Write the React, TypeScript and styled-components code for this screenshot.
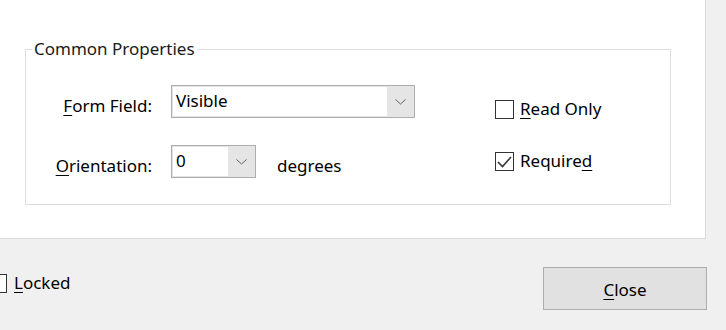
import React from 'react';
import styled, { createGlobalStyle } from 'styled-components';

const GlobalStyle = createGlobalStyle`
  html, body {
    margin: 0;
    padding: 0;
    background: #f0f0f0;
  }
  body {
    font-family: 'Noto Sans', 'Open Sans', sans-serif;
    font-size: 17px;
    color: #000;
  }
`;

const Window = styled.div`
  width: 726px;
  height: 330px;
  overflow: hidden;
  display: flex;
  flex-direction: column;
`;

const Panel = styled.div`
  width: 706px;
  height: 239px;
  flex-shrink: 0;
  background: #fff;
  border-right: 1px solid #dadada;
  border-bottom: 1px solid #dadada;
  padding: 38px 0 0 25px;
  box-sizing: border-box;
`;

const Group = styled.fieldset`
  margin: 0;
  padding: 25px 0 0 0;
  width: 646px;
  height: 167px;
  box-sizing: border-box;
  border: 1px solid #dcdcdc;
  display: grid;
  grid-template-columns: 469px auto;
  align-content: start;
`;

const Legend = styled.legend`
  margin-left: 6px;
  padding: 0 2px;
  line-height: 22px;
  color: #1a1a1a;
`;

const Fields = styled.div`
  display: flex;
  flex-direction: column;
  gap: 27px;
`;

const Row = styled.div`
  display: flex;
  align-items: flex-end;
`;

const Label = styled.span`
  width: 126px;
  text-align: right;
  line-height: 20px;
  margin-right: 19px;
  padding-bottom: 2px;
`;

const Suffix = styled.span`
  margin-left: 21px;
  line-height: 20px;
  padding-bottom: 2px;
`;

const Select = styled.div<{ $width: number }>`
  width: ${(p) => p.$width}px;
  height: 33px;
  box-sizing: border-box;
  border: 1px solid #adadad;
  background: #e5e5e5;
  padding: 1px 0 1px 1px;
  display: flex;
`;

const SelectValue = styled.div`
  flex: 1;
  background: #fff;
  padding-left: 3px;
  line-height: 28px;
`;

const Arrow = styled.div`
  width: 27px;
  display: flex;
  align-items: center;
  justify-content: center;
`;

const Checks = styled.div`
  display: flex;
  flex-direction: column;
  gap: 32px;
  padding-top: 14px;
`;

const CheckRow = styled.label`
  display: flex;
  align-items: center;
  gap: 6px;
  line-height: 20px;
`;

const Box = styled.span`
  width: 19px;
  height: 19px;
  box-sizing: border-box;
  border: 1px solid #333;
  background: #fff;
  display: flex;
  align-items: center;
  justify-content: center;
`;

const Footer = styled.div`
  flex: 1;
  display: flex;
  align-items: flex-start;
  justify-content: space-between;
  padding-top: 28px;
`;

const LockedRow = styled(CheckRow)`
  margin-left: -12px;
  margin-top: 6px;
  gap: 7px;
`;

const CloseButton = styled.button`
  width: 164px;
  height: 43px;
  margin-right: 19px;
  border: 1px solid #adadad;
  background: #e1e1e1;
  font: inherit;
  color: #000;
  padding: 2px 0 0;
`;

const Key = styled.u`
  text-decoration-thickness: 1px;
  text-underline-offset: 3px;
`;

function Chevron() {
  return (
    <svg width="11" height="6" viewBox="0 0 11 6">
      <path d="M0.5 0.5 L5.5 5 L10.5 0.5" fill="none" stroke="#606060" strokeWidth="1" />
    </svg>
  );
}

function Check() {
  return (
    <svg width="17" height="17" viewBox="0 0 17 17">
      <path d="M2 9 L6.5 13.5 L15 4" fill="none" stroke="#333" strokeWidth="1.6" />
    </svg>
  );
}

type CheckboxProps = { checked?: boolean; children: React.ReactNode };

function Checkbox({ checked, children }: CheckboxProps) {
  return (
    <CheckRow>
      <Box>{checked && <Check />}</Box>
      <span>{children}</span>
    </CheckRow>
  );
}

export default function App() {
  return (
    <Window>
      <GlobalStyle />
      <Panel>
        <Group>
          <Legend>Common Properties</Legend>
          <Fields>
            <Row>
              <Label>
                <Key>F</Key>orm Field:
              </Label>
              <Select $width={244}>
                <SelectValue>Visible</SelectValue>
                <Arrow>
                  <Chevron />
                </Arrow>
              </Select>
            </Row>
            <Row>
              <Label>
                <Key>O</Key>rientation:
              </Label>
              <Select $width={85}>
                <SelectValue>0</SelectValue>
                <Arrow>
                  <Chevron />
                </Arrow>
              </Select>
              <Suffix>degrees</Suffix>
            </Row>
          </Fields>
          <Checks>
            <Checkbox>
              <Key>R</Key>ead Only
            </Checkbox>
            <Checkbox checked>
              Require<Key>d</Key>
            </Checkbox>
          </Checks>
        </Group>
      </Panel>
      <Footer>
        <LockedRow>
          <Box />
          <span>
            <Key>L</Key>ocked
          </span>
        </LockedRow>
        <CloseButton>
          <Key>C</Key>lose
        </CloseButton>
      </Footer>
    </Window>
  );
}
